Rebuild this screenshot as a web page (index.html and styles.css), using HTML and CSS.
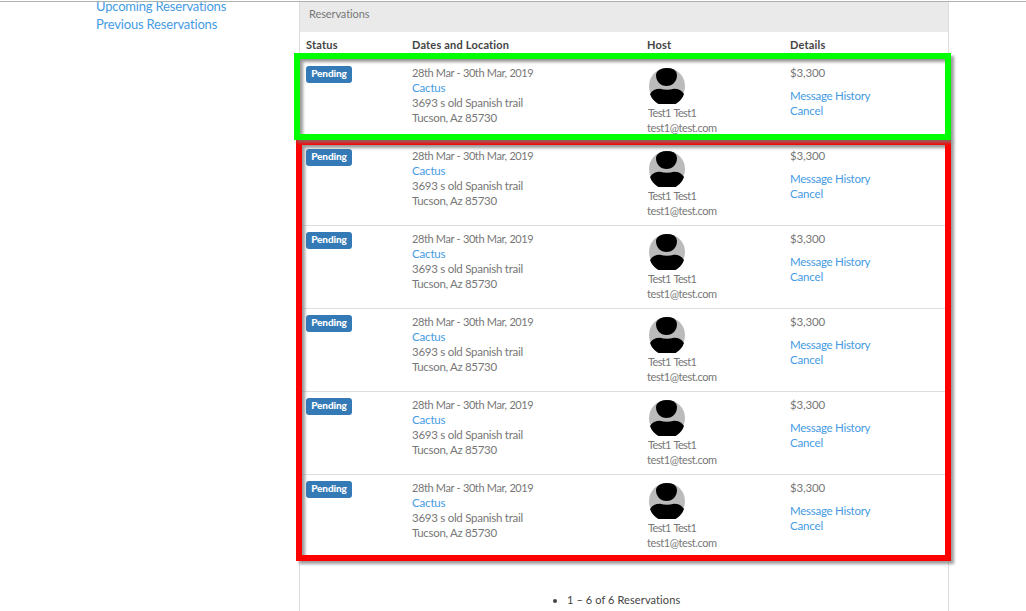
FILE: index.html
```
<!DOCTYPE html>
<html lang="en">
<head>
<meta charset="utf-8">
<title>Reservations</title>
<link rel="stylesheet" href="styles.css">
</head>
<body>
<svg class="defs" width="0" height="0">
  <symbol id="avatar" viewBox="0 0 36 36">
    <circle cx="18" cy="18" r="18" fill="#bbb"/>
    <path d="M11 1.400Q18-1.400 25 1.400Q28 3.500 28 7C28 13.500 23.500 18 17.500 18S7 13.500 7 7Q7 3.500 11 1.400Z"/>
    <path d="M1 26C3 22.500 6.500 20.700 11 20.700Q18 22.600 25 20.700C29.500 20.700 33 22.500 35 26A18 18 0 0 1 1 26Z"/>
  </symbol>
</svg>
<div class="page">
  <nav class="sidebar">
    <a class="upcoming">Upcoming Reservations</a>
    <a class="previous">Previous Reservations</a>
  </nav>
  <main class="panel">
    <h1 class="panel-title">Reservations</h1>
    <div class="row head"><span>Status</span><span>Dates and Location</span><span>Host</span><span>Details</span></div>
    <div id="rows"></div>
    <ul class="pager"><li>1 – 6 of 6 Reservations</li></ul>
  </main>
</div>
<div class="mark mark-red"></div>
<div class="mark mark-green"></div>
<template id="reservation">
  <div class="row item">
    <div><span class="badge">Pending</span></div>
    <div class="lines"><span class="dates">28th Mar - 30th Mar, 2019</span><a class="place">Cactus</a><span class="street">3693 s old Spanish trail</span><span class="city">Tucson, Az 85730</span></div>
    <div class="lines host"><svg class="avatar"><use href="#avatar"/></svg><span class="name">Test1 Test1</span><span class="email">test1@test.com</span></div>
    <div class="lines"><span class="price">$3,300</span><a class="history">Message History</a><a class="cancel">Cancel</a></div>
  </div>
</template>
<script src="script.js"></script>
</body>
</html>
```
FILE: script.js
```
const template = document.getElementById('reservation');
const rows = document.getElementById('rows');
for (let i = 0; i < 6; i++) rows.append(template.content.cloneNode(true));
```
FILE: styles.css
```
* { box-sizing: border-box; }
body { margin: 0; height: 611px; overflow: hidden; background: #fff; color: #666; font: 400 12px/15px Lato, "Open Sans", sans-serif; }
.defs { display: block; height: 0; }
.page { display: flex; height: 611px; border-top: 1px solid #fff; }
.page::before { content: ""; position: absolute; top: 1px; left: 0; width: 100%; height: 1px; background: #adb2ad; }
.sidebar { width: 299px; padding: 1px 0 0 96px; display: flex; flex-direction: column; margin-top: 1px; font-size: 13px; line-height: 18px; letter-spacing: -.19px; }
.sidebar a { white-space: nowrap; }
.upcoming { margin-top: -6px; }
a { color: #459be3; }
.panel { width: 650px; height: 610px; border: 1px solid #ddd; border-width: 0 1px; }
.panel-title { margin: 1px 0 0; height: 30px; padding: 4px 9px; background: #eaeaea; font-size: 11px; line-height: 15px; font-weight: 400; letter-spacing: -.1px; color: #777; }
.row { display: grid; grid-template-columns: 106px 235px 143px 1fr; padding-left: 6px; white-space: nowrap; }
.head { height: 27px; padding-top: 5px; color: #444; font-size: 11px; font-weight: 700; letter-spacing: .19px; }
.item { height: 83px; border-top: 1px solid #ddd; padding-top: 5px; font-size: 11.5px; color: #777; }
.lines { display: flex; flex-direction: column; align-items: flex-start; }
.dates { font-size: 11px; letter-spacing: -.42px; word-spacing: .3px; }
.place, .cancel, .price { letter-spacing: -.17px; }
.street, .history { letter-spacing: -.27px; }
.city { letter-spacing: -.32px; }
.name { font-size: 11px; letter-spacing: -.65px; word-spacing: .8px; padding-left: 1px; }
.email { font-size: 11px; letter-spacing: -.42px; }
.badge { display: block; width: 46px; height: 17px; margin-top: 1px; border-radius: 3px; background: #337ab7; color: #fff; font-size: 10px; line-height: 15px; font-weight: 900; text-align: center; letter-spacing: -.1px; }
.avatar { width: 36px; height: 36px; margin: 3px 0 1px 2px; }
.history { margin-top: 8px; }
.pager { margin: 35px 0 0; padding: 0 0 0 267px; color: #444; font-size: 11px; letter-spacing: .1px; }
.mark { position: absolute; border: 6px solid red; filter: drop-shadow(3px 3px 1.5px #777b); }
.mark-red { left: 296px; top: 139px; width: 655px; height: 422px; }
.mark-green { left: 294px; top: 53px; width: 657px; height: 87px; border-color: #0f0; }
```
